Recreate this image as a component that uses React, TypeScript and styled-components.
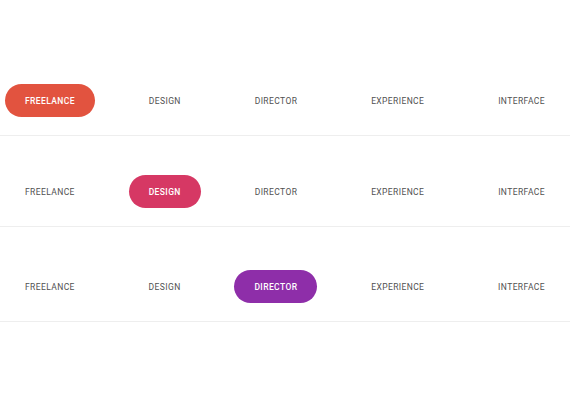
import React from "react";
import styled, { createGlobalStyle } from "styled-components";

const Global = createGlobalStyle`
  html, body { margin: 0; padding: 0; background: #fff; }
  body { font-family: Roboto, "Noto Sans", Arial, sans-serif; }
`;

const Page = styled.div`
  display: flex;
  flex-direction: column;
  padding-top: 84px;
`;

const Row = styled.nav<{ $top: number }>`
  display: flex;
  justify-content: space-between;
  align-items: center;
  padding: 0 5px 18px;
  margin-top: ${(p) => p.$top}px;
  border-bottom: 1px solid #eeeeee;
`;

const Tab = styled.a<{ $color?: string }>`
  display: flex;
  align-items: center;
  justify-content: center;
  height: 33px;
  padding: 0 20px;
  border-radius: 17px;
  font-size: 8.5px;
  letter-spacing: 0.4px;
  text-transform: uppercase;
  text-decoration: none;
  white-space: nowrap;
  color: ${(p) => (p.$color ? "#fff" : "#505050")};
  background: ${(p) => p.$color ?? "transparent"};
  font-weight: ${(p) => (p.$color ? 500 : 400)};
`;

const items = ["Freelance", "Design", "Director", "Experience", "Interface"];

const rows = [
  { active: 0, color: "#e2533f", top: 0 },
  { active: 1, color: "#d63864", top: 39 },
  { active: 2, color: "#8e2ea9", top: 43 },
];

export default function App() {
  return (
    <>
      <Global />
      <Page>
        {rows.map((r, i) => (
          <Row key={i} $top={r.top}>
            {items.map((t, j) => (
              <Tab key={t} $color={j === r.active ? r.color : undefined}>
                {t}
              </Tab>
            ))}
          </Row>
        ))}
      </Page>
    </>
  );
}
